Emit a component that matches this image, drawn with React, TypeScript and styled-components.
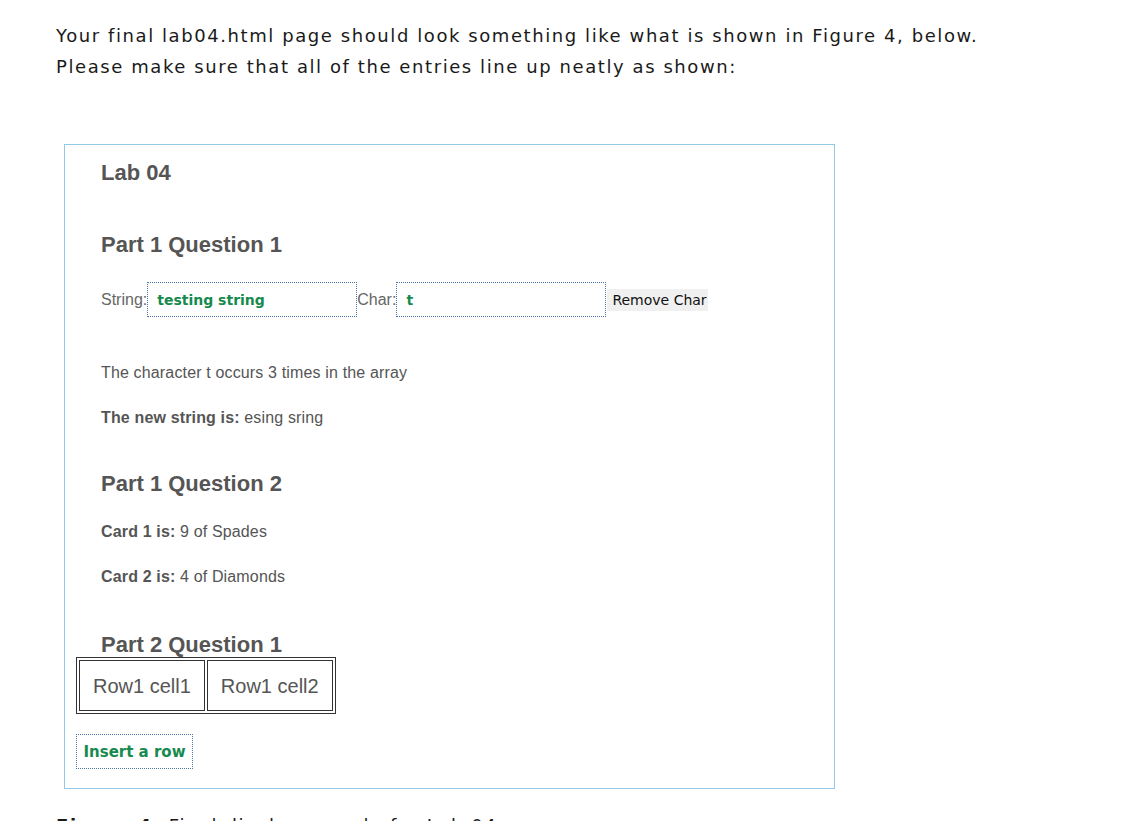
import styled, { createGlobalStyle } from 'styled-components';

const GlobalStyle = createGlobalStyle`
  body {
    margin: 0;
    background: #ffffff;
  }
`;

const Page = styled.div`
  padding: 20px 0 0 56px;
  font-family: "DejaVu Sans", Verdana, sans-serif;
  color: #1a1a1a;
`;

const Intro = styled.p`
  margin: 0;
  font-size: 18px;
  line-height: 31px;
  letter-spacing: 1.58px;
  width: 1060px;
`;

const Figure = styled.div`
  margin: 62px 0 0 8px;
  width: 758px;
  height: 627px;
  border: 1px solid #93c9e6;
  padding: 16px 0 0 11px;
  box-sizing: content-box;
  font-family: "Liberation Sans", Arial, sans-serif;
  color: #555555;
`;

const Heading = styled.h2<{ $top: number }>`
  margin: ${(p) => p.$top}px 0 0 25px;
  font-size: 22px;
  line-height: 24px;
  font-weight: bold;
  color: #555555;
`;

const FormRow = styled.div`
  display: flex;
  align-items: center;
  margin: 25px 0 0 25px;
  font-size: 16px;
`;

const Label = styled.span`
  color: #666666;
`;

const Field = styled.div`
  display: flex;
  align-items: center;
  padding-left: 9px;
  box-sizing: border-box;
  width: 210px;
  height: 35px;
  border: 1px dotted #4a73a8;
  font-family: "DejaVu Sans", Verdana, sans-serif;
  font-weight: bold;
  font-size: 14px;
  color: #168a4e;
`;

const Button = styled.div`
  margin-left: 1px;
  height: 22px;
  padding: 0 1px 0 5px;
  display: flex;
  align-items: center;
  background: #f0f0f0;
  font-family: "DejaVu Sans", Verdana, sans-serif;
  font-size: 14px;
  color: #111111;
`;

const Text = styled.p<{ $top: number }>`
  margin: ${(p) => p.$top}px 0 0 25px;
  font-size: 16px;
  line-height: 20px;
  letter-spacing: 0.15px;
  color: #555555;
`;

const Table = styled.table`
  margin-top: 0;
  border: 1px solid #333333;
  border-spacing: 2px;
`;

const Cell = styled.td`
  border: 1px solid #333333;
  padding: 14px 13px 13px 13px;
  font-size: 20px;
  line-height: 22px;
  color: #555555;
`;

const InsertButton = styled.div`
  margin-top: 20px;
  width: 117px;
  height: 35px;
  box-sizing: border-box;
  border: 1px dotted #4a73a8;
  display: flex;
  align-items: center;
  justify-content: center;
  font-family: "DejaVu Sans", Verdana, sans-serif;
  font-weight: bold;
  font-size: 15px;
  color: #168a4e;
`;

const Caption = styled.p`
  margin: 21px 0 0 0;
  font-size: 18px;
  line-height: 31px;
  letter-spacing: 1.58px;
`;

export default function App() {
  return (
    <>
      <GlobalStyle />
      <Page>
        <Intro>
          Your final lab04.html page should look something like what is shown in Figure 4, below.
          <br />
          Please make sure that all of the entries line up neatly as shown:
        </Intro>
        <Figure>
          <Heading $top={0}>Lab 04</Heading>
          <Heading $top={48}>Part 1 Question 1</Heading>
          <FormRow>
            <Label>String:</Label>
            <Field>testing string</Field>
            <Label>Char:</Label>
            <Field>t</Field>
            <Button>Remove Char</Button>
          </FormRow>
          <Text $top={46}>The character t occurs 3 times in the array</Text>
          <Text $top={25}>
            <b>The new string is:</b> esing sring
          </Text>
          <Heading $top={44}>Part 1 Question 2</Heading>
          <Text $top={26}>
            <b>Card 1 is:</b> 9 of Spades
          </Text>
          <Text $top={25}>
            <b>Card 2 is:</b> 4 of Diamonds
          </Text>
          <Heading $top={46}>Part 2 Question 1</Heading>
          <Table>
            <tbody>
              <tr>
                <Cell>Row1 cell1</Cell>
                <Cell>Row1 cell2</Cell>
              </tr>
            </tbody>
          </Table>
          <InsertButton>Insert a row</InsertButton>
        </Figure>
        <Caption>
          <b>Figure 4:</b> Final display sample for Lab 04
        </Caption>
      </Page>
    </>
  );
}
